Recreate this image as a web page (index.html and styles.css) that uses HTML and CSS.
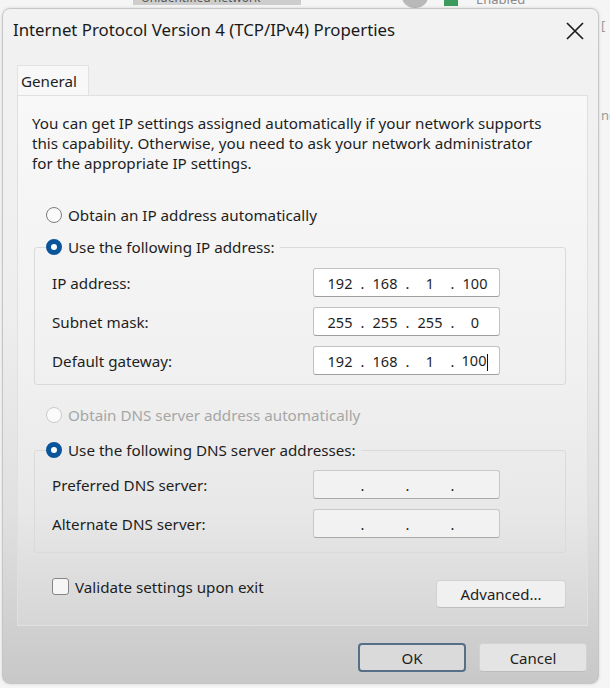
FILE: index.html
```html
<!DOCTYPE html>
<html lang="en">
<head>
    <meta charset="UTF-8">
    <title>Internet Protocol Version 4 (TCP/IPv4) Properties</title>
    <link rel="stylesheet" href="styles.css">
</head>
<body>
	<div class="backdrop">
		<div class="bg-tab">Unidentified network</div>
		<div class="bg-icon"></div>
		<div class="bg-flag"></div>
		<div class="bg-status">Enabled</div>
		<div class="bg-side">[<br><br><br><br><br>ne</div>
	</div>

	<div class="window">
		<div class="titlebar">
			<span class="title">Internet Protocol Version 4 (TCP/IPv4) Properties</span>
			<button class="close" aria-label="Close">
				<svg width="20" height="20" viewBox="0 0 20 20">
					<path d="M2 2 L18 18 M18 2 L2 18" stroke="#1c1c1c" stroke-width="1.7" fill="none"/>
				</svg>
			</button>
		</div>

		<div class="tabs">
			<div class="tab">General</div>
		</div>

		<div class="panel">
			<p class="intro">
				You can get IP settings assigned automatically if your network supports<br>
				this capability. Otherwise, you need to ask your network administrator<br>
				for the appropriate IP settings.
			</p>

			<div class="radio option">
				<span class="dot"></span>Obtain an IP address automatically
			</div>

			<fieldset class="group ip-group">
				<legend><span class="radio"><span class="dot on"></span>Use the following IP address:</span></legend>
				<div class="row">
					<span>IP address:</span>
					<div class="ipbox">
						<span class="oct">192</span><i>.</i><span class="oct">168</span><i>.</i><span class="oct">1</span><i>.</i><span class="oct">100</span>
					</div>
				</div>
				<div class="row">
					<span>Subnet mask:</span>
					<div class="ipbox">
						<span class="oct">255</span><i>.</i><span class="oct">255</span><i>.</i><span class="oct">255</span><i>.</i><span class="oct">0</span>
					</div>
				</div>
				<div class="row">
					<span>Default gateway:</span>
					<div class="ipbox">
						<span class="oct">192</span><i>.</i><span class="oct">168</span><i>.</i><span class="oct">1</span><i>.</i><span class="oct">100<b class="caret"></b></span>
					</div>
				</div>
			</fieldset>

			<div class="radio option disabled">
				<span class="dot"></span>Obtain DNS server address automatically
			</div>

			<fieldset class="group dns-group">
				<legend><span class="radio"><span class="dot on"></span>Use the following DNS server addresses:</span></legend>
				<div class="row">
					<span>Preferred DNS server:</span>
					<div class="ipbox empty">
						<span class="oct"></span><i>.</i><span class="oct"></span><i>.</i><span class="oct"></span><i>.</i><span class="oct"></span>
					</div>
				</div>
				<div class="row">
					<span>Alternate DNS server:</span>
					<div class="ipbox empty">
						<span class="oct"></span><i>.</i><span class="oct"></span><i>.</i><span class="oct"></span><i>.</i><span class="oct"></span>
					</div>
				</div>
			</fieldset>

			<div class="bottom-row">
				<div class="check"><span class="box"></span>Validate settings upon exit</div>
				<button class="btn advanced">Advanced...</button>
			</div>
		</div>

		<div class="footer">
			<button class="btn default">OK</button>
			<button class="btn">Cancel</button>
		</div>
	</div>
</body>
</html>
```

FILE: styles.css
```css
		html, body {
			margin: 0;
			padding: 0;
		}

		body {
			width: 610px;
			height: 688px;
			overflow: hidden;
			position: relative;
			background: #f5f5f5;
			font-family: "Noto Sans", "Open Sans", sans-serif;
			font-size: 15.2px;
			color: #1e1e1e;
		}

		/* bits of the window behind, only the top strip and the right edge show */
		.backdrop {
			position: absolute;
			top: 0;
			left: 0;
			width: 610px;
			height: 688px;
		}

		.bg-tab {
			position: absolute;
			left: 133px;
			top: -8px;
			width: 168px;
			height: 13px;
			background: #cdcdcd;
			font-size: 12px;
			line-height: 12px;
			color: #555;
			padding-left: 8px;
			box-sizing: border-box;
		}

		.bg-icon {
			position: absolute;
			left: 402px;
			top: -14px;
			width: 26px;
			height: 22px;
			border-radius: 50%;
			background: #b9b9b9;
		}

		.bg-flag {
			position: absolute;
			left: 444px;
			top: -4px;
			width: 14px;
			height: 10px;
			background: #3c9a5f;
		}

		.bg-status {
			position: absolute;
			left: 476px;
			top: -10px;
			font-size: 13px;
			color: #8a8a8a;
		}

		.bg-side {
			position: absolute;
			left: 601px;
			top: 16px;
			font-size: 13px;
			line-height: 18px;
			color: #9a9a9a;
		}

		.window {
			position: relative;
			margin: 8px 0 0 2px;
			width: 597px;
			height: 676px;
			box-sizing: border-box;
			border: 1px solid #c6c6c6;
			border-radius: 8px;
			background: linear-gradient(#f2f2f2 0%, #eeeeee 45%, #e0e0e0 75%, #c8c8c8 100%);
			box-shadow: 0 0 3px rgba(0, 0, 0, 0.15);
		}

		.titlebar {
			display: flex;
			justify-content: space-between;
			align-items: flex-start;
			height: 56px;
			padding: 10px 0 0 10px;
			box-sizing: border-box;
		}

		.title {
			font-size: 16.8px;
			line-height: 22px;
			color: #1a1a1a;
		}

		.close {
			margin: 2px 13px 0 0;
			padding: 0;
			border: 0;
			background: none;
			width: 20px;
			height: 20px;
		}

		.tabs {
			display: flex;
			padding-left: 14px;
		}

		.tab {
			width: 72px;
			height: 30px;
			box-sizing: border-box;
			padding-left: 3px;
			line-height: 30px;
			background: #f8f8f8;
			border: 1px solid #e2e2e2;
			border-bottom: 0;
		}

		.panel {
			margin-left: 14px;
			width: 571px;
			height: 531px;
			box-sizing: border-box;
			padding: 17px 19px 0 14px;
			border: 1px solid #e0e0e0;
			background: linear-gradient(#f8f8f8 0%, #f1f1f1 50%, #e8e8e8 78%, #d6d6d6 100%);
		}

		.intro {
			margin: 0;
			line-height: 20px;
			white-space: nowrap;
		}

		.radio {
			display: flex;
			align-items: center;
			height: 20px;
			line-height: 20px;
			white-space: nowrap;
		}

		.option {
			margin-left: 14px;
			margin-top: 32px;
		}

		.option.disabled {
			margin-top: 20px;
			color: #a6a6a6;
		}

		.dot {
			width: 16px;
			height: 16px;
			box-sizing: border-box;
			border-radius: 50%;
			border: 1px solid #7c7c7c;
			background: #fbfbfb;
			margin-right: 6px;
		}

		.disabled .dot {
			border-color: #c9c9c9;
		}

		.dot.on {
			border: 5px solid #0a549c;
			background: #fff;
		}

		.group {
			margin: 12px 2px 0 2px;
			padding: 11px 0 9px 11px;
			border: 1px solid #dadada;
			border-radius: 3px;
			min-inline-size: 0;
		}

		.dns-group {
			margin-top: 15px;
			padding-top: 10px;
			padding-bottom: 14px;
		}

		.group legend {
			padding: 0 5px 0 0;
		}

		.row {
			display: grid;
			grid-template-columns: 261px 187px;
			align-items: center;
			padding-left: 6px;
			margin-bottom: 10px;
		}

		.row:last-child {
			margin-bottom: 0;
		}

		.ipbox {
			display: flex;
			height: 29px;
			box-sizing: border-box;
			padding-left: 8px;
			align-items: center;
			border: 1px solid #c2c2c2;
			border-bottom-color: #9e9e9e;
			border-radius: 3px;
			background: #fff;
			font-size: 14.5px;
		}

		.ipbox.empty {
			background: #f2f2f2;
			border-color: #c8c8c8;
			border-bottom-color: #a8a8a8;
		}

		.oct {
			width: 36px;
			text-align: center;
			position: relative;
		}

		.ipbox i {
			font-style: normal;
			width: 9px;
			text-align: center;
		}

		.caret {
			display: inline-block;
			width: 1px;
			height: 17px;
			background: #111;
			vertical-align: middle;
			margin-left: 1px;
		}

		.bottom-row {
			display: flex;
			justify-content: space-between;
			align-items: flex-start;
			margin: 24px 2px 0 20px;
		}

		.check {
			display: flex;
			align-items: center;
			height: 19px;
		}

		.check .box {
			width: 17px;
			height: 17px;
			box-sizing: border-box;
			border: 1px solid #858585;
			border-radius: 3px;
			background: #f6f6f6;
			margin-right: 6px;
		}

		.btn {
			font-family: inherit;
			font-size: 15px;
			color: #1e1e1e;
			width: 108px;
			height: 29px;
			padding: 0;
			border: 1px solid #d2d2d2;
			border-bottom-color: #bdbdbd;
			border-radius: 4px;
			background: #e4e4e4;
		}

		.btn.advanced {
			width: 130px;
			height: 28px;
			margin-top: 3px;
			background: #f0f0f0;
		}

		.btn.default {
			border: 2px solid #566e88;
			background: #dadada;
		}

		.footer {
			display: flex;
			justify-content: flex-end;
			gap: 13px;
			padding: 17px 11px 0 0;
		}
```
